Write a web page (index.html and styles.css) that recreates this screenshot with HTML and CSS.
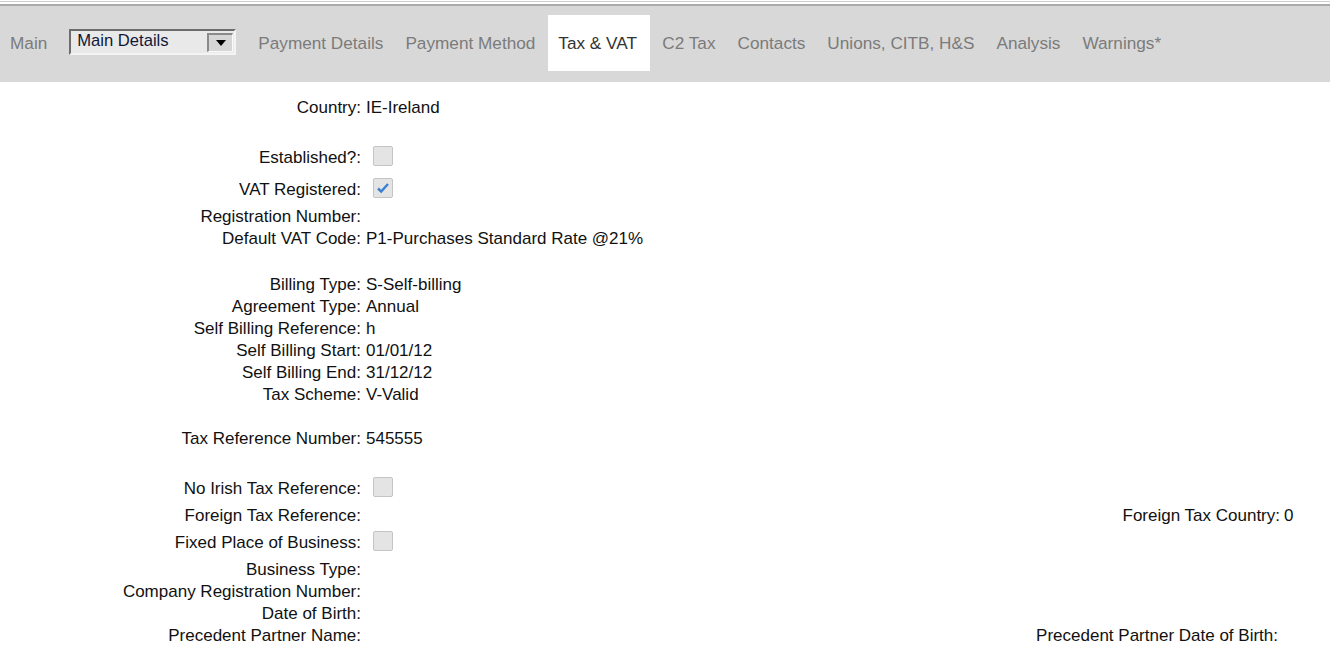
FILE: index.html
```html
<!DOCTYPE html>
<html>
<head>
<meta charset="utf-8">
<link rel="stylesheet" href="styles.css">
</head>
<body>
<div class="topline"></div>
<nav class="tabs">
  <span class="tab">Main</span>
  <div class="select">
    <span class="select-text">Main Details</span>
    <span class="select-btn"><svg width="12" height="8" viewBox="0 0 12 8"><path d="M1 1h10L6 7z" fill="#000"/></svg></span>
  </div>
  <span class="tab">Payment Details</span>
  <span class="tab">Payment Method</span>
  <span class="tab active">Tax &amp; VAT</span>
  <span class="tab">C2 Tax</span>
  <span class="tab">Contacts</span>
  <span class="tab">Unions, CITB, H&amp;S</span>
  <span class="tab">Analysis</span>
  <span class="tab">Warnings*</span>
</nav>
<main class="form">
  <div class="row"><span class="lbl">Country:</span><span class="val">IE-Ireland</span></div>
  <div class="gap g23"></div>
  <div class="row cb"><span class="lbl">Established?:</span><span class="val"><span class="check"></span></span></div>
  <div class="row cb"><span class="lbl">VAT Registered:</span><span class="val"><span class="check"><svg width="14" height="12" viewBox="0 0 14 12"><path d="M2 6.5l3.2 3L12 2" fill="none" stroke="#3d7fd0" stroke-width="2.4"/></svg></span></span></div>
  <div class="row"><span class="lbl">Registration Number:</span><span class="val"></span></div>
  <div class="row"><span class="lbl">Default VAT Code:</span><span class="val">P1-Purchases Standard Rate @21%</span></div>
  <div class="gap g24"></div>
  <div class="row"><span class="lbl">Billing Type:</span><span class="val">S-Self-billing</span></div>
  <div class="row"><span class="lbl">Agreement Type:</span><span class="val">Annual</span></div>
  <div class="row"><span class="lbl">Self Billing Reference:</span><span class="val">h</span></div>
  <div class="row"><span class="lbl">Self Billing Start:</span><span class="val">01/01/12</span></div>
  <div class="row"><span class="lbl">Self Billing End:</span><span class="val">31/12/12</span></div>
  <div class="row"><span class="lbl">Tax Scheme:</span><span class="val">V-Valid</span></div>
  <div class="gap g22"></div>
  <div class="row"><span class="lbl">Tax Reference Number:</span><span class="val">545555</span></div>
  <div class="gap g23"></div>
  <div class="row cb"><span class="lbl">No Irish Tax Reference:</span><span class="val"><span class="check"></span></span></div>
  <div class="row"><span class="lbl">Foreign Tax Reference:</span><span class="val"></span><span class="lbl2">Foreign Tax Country:</span><span class="val2">0</span></div>
  <div class="row cb"><span class="lbl">Fixed Place of Business:</span><span class="val"><span class="check"></span></span></div>
  <div class="row"><span class="lbl">Business Type:</span><span class="val"></span></div>
  <div class="row"><span class="lbl">Company Registration Number:</span><span class="val"></span></div>
  <div class="row"><span class="lbl">Date of Birth:</span><span class="val"></span></div>
  <div class="row"><span class="lbl">Precedent Partner Name:</span><span class="val"></span><span class="lbl2 alt">Precedent Partner Date of Birth:</span><span class="val2"></span></div>
</main>
</body>
</html>
```
FILE: styles.css
```css
html, body {
  margin: 0;
  padding: 0;
  background: #fff;
}
body {
  font-family: "Liberation Sans", Arial, sans-serif;
  color: #111;
  overflow: hidden;
}
.topline {
  height: 1px;
  margin-top: 1px;
  background: #cfcfcf;
  margin-bottom: 2px;
}
.tabs {
  display: flex;
  align-items: flex-start;
  height: 78px;
  background: #d8d8d8;
  border-top: 2px solid #ababab;
  box-sizing: border-box;
  padding-left: 10px;
}
.tab {
  font-size: 17.2px;
  color: #7b7b7b;
  margin-top: 27px;
  margin-right: 22px;
  line-height: 20px;
}
.tab.active {
  background: #fff;
  color: #333;
  margin-top: 9px;
  width: 102px;
  height: 56px;
  line-height: 20px;
  padding: 18px 0 0 10px;
  box-sizing: border-box;
  margin-left: -9px;
  margin-right: 12px;
  white-space: nowrap;
}
.select {
  margin-top: 23px;
  margin-right: 22px;
  width: 167px;
  height: 26px;
  box-sizing: border-box;
  background: #e9e9e9;
  border-top: 2px solid #6d6d6d;
  border-left: 2px solid #6d6d6d;
  border-right: 2px solid #f4f4f4;
  border-bottom: 2px solid #f4f4f4;
  display: flex;
  align-items: flex-start;
  justify-content: space-between;
}
.select-text {
  font-size: 16.6px;
  color: #10183a;
  line-height: 18px;
  padding-left: 6px;
  margin-top: 1px;
}
.select-btn {
  width: 26px;
  height: 19px;
  margin-top: 2px;
  margin-right: 1px;
  box-sizing: border-box;
  background: #d6d6d6;
  border-top: 2px solid #8a8a8a;
  border-left: 2px solid #8a8a8a;
  border-right: 1px solid #fafafa;
  border-bottom: 1px solid #fafafa;
  display: flex;
  align-items: center;
  justify-content: center;
}
.form {
  display: grid;
  grid-template-columns: 361px 1fr auto 50px;
  padding-top: 15px;
  font-size: 17px;
  line-height: 22px;
}
.row {
  display: contents;
}
.lbl {
  grid-column: 1;
  text-align: right;
  white-space: nowrap;
  height: 22px;
}
.val {
  grid-column: 2;
  padding-left: 5px;
  white-space: nowrap;
}
.lbl2 {
  grid-column: 3;
  text-align: right;
  white-space: nowrap;
}
.lbl2.alt {
  padding-right: 2px;
}
.val2 {
  grid-column: 4;
  padding-left: 4px;
}
.row.cb .lbl,
.row.cb .val {
  height: 32px;
  line-height: 32px;
}
.check {
  display: inline-flex;
  align-items: center;
  justify-content: center;
  width: 20px;
  height: 20px;
  box-sizing: border-box;
  margin-left: 7px;
  margin-top: 4px;
  background: #e4e4e4;
  border: 1px solid #c4c4c4;
  border-radius: 2px;
  vertical-align: top;
}
.gap {
  grid-column: 1 / -1;
}
.g22 { height: 22px; }
.g23 { height: 23px; }
.g24 { height: 24px; }
```
